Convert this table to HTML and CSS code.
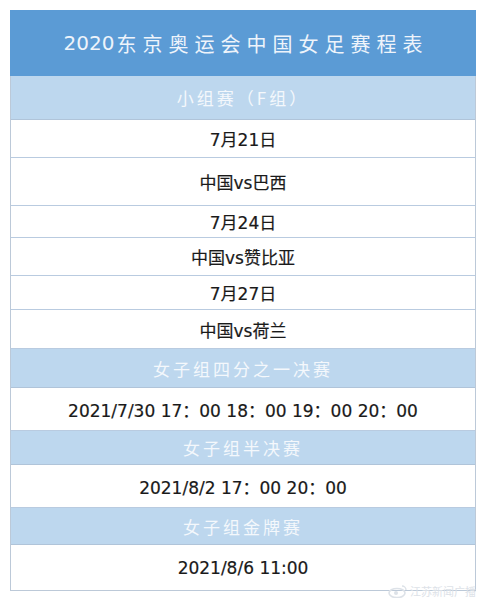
FILE: index.html
```html
<!DOCTYPE html>
<html lang="zh">
<head>
<meta charset="utf-8">
<link rel="stylesheet" href="styles.css">
</head>
<body>
<div class="sheet">
  <div class="row title"><span class="num">2020</span><span class="cjk">东京奥运会中国女足赛程表</span></div>
  <div class="row sec h44">小组赛（F组）</div>
  <div class="row cell h38">7月21日</div>
  <div class="row cell h48">中国vs巴西</div>
  <div class="row cell h32">7月24日</div>
  <div class="row cell h38">中国vs赞比亚</div>
  <div class="row cell h34">7月27日</div>
  <div class="row cell h39">中国vs荷兰</div>
  <div class="row sec h39">女子组四分之一决赛</div>
  <div class="row cell h43">2021/7/30 17：00 18：00 19：00 20：00</div>
  <div class="row sec h34">女子组半决赛</div>
  <div class="row cell h43">2021/8/2 17：00 20：00</div>
  <div class="row sec h37">女子组金牌赛</div>
  <div class="row cell h45 last">2021/8/6 11:00</div>
</div>
<div class="mark">
  <svg class="logo" width="20" height="14" viewBox="0 0 20 14"><ellipse cx="9" cy="9" rx="8" ry="4.5" fill="none" stroke="#dde2e8" stroke-width="1.6"/><circle cx="8" cy="9" r="2" fill="#dde2e8"/><path d="M14 2 a4 4 0 0 1 4 4" fill="none" stroke="#dde2e8" stroke-width="1.4"/></svg>
  <span class="mark-text">江苏新闻广播</span>
</div>
</body>
</html>
```

FILE: styles.css
```css
html, body {
  margin: 0;
  padding: 0;
  background: #ffffff;
}
body {
  width: 486px;
  height: 600px;
  position: relative;
  overflow: hidden;
  font-family: "DejaVu Sans", "Noto Sans CJK SC", sans-serif;
}
.sheet {
  margin: 10px 0 0 10px;
  width: 466px;
  box-sizing: border-box;
  border: 1px solid #bcc9d8;
  border-top: none;
  display: flex;
  flex-direction: column;
}
.row {
  box-sizing: border-box;
  display: flex;
  align-items: center;
  justify-content: center;
  white-space: nowrap;
}
.title {
  height: 66px;
  background: #5b9bd5;
  color: #eef4fb;
  font-size: 20px;
  margin: 0 -1px;
}
.title .num {
  font-family: "DejaVu Sans", sans-serif;
  letter-spacing: 0;
}
.title .cjk {
  font-family: "Noto Sans CJK SC", sans-serif;
  letter-spacing: 6px;
  margin-left: 2px;
  margin-right: -6px;
}
.sec {
  background: #bdd7ee;
  color: #f4f8fc;
  font-family: "Noto Sans CJK SC", sans-serif;
  font-size: 17px;
  letter-spacing: 3px;
  border-bottom: 1px solid #b0c4d9;
}
.cell {
  background: #ffffff;
  color: #1a1a1a;
  font-size: 17px;
  border-bottom: 1px solid #b9cbe0;
  -webkit-text-stroke: 0.2px #1a1a1a;
}
.cell.last {
  border-bottom: none;
}
.h32 { height: 32px; }
.h34 { height: 34px; }
.h37 { height: 37px; }
.h38 { height: 38px; }
.h39 { height: 39px; }
.h43 { height: 43px; }
.h44 { height: 44px; }
.h45 { height: 45px; }
.h48 { height: 48px; }
.mark {
  position: absolute;
  left: 388px;
  top: 583px;
  display: flex;
  align-items: center;
  gap: 2px;
}
.mark-text {
  font-family: "Noto Sans CJK SC", sans-serif;
  font-size: 11px;
  color: #dde2e8;
}
```
